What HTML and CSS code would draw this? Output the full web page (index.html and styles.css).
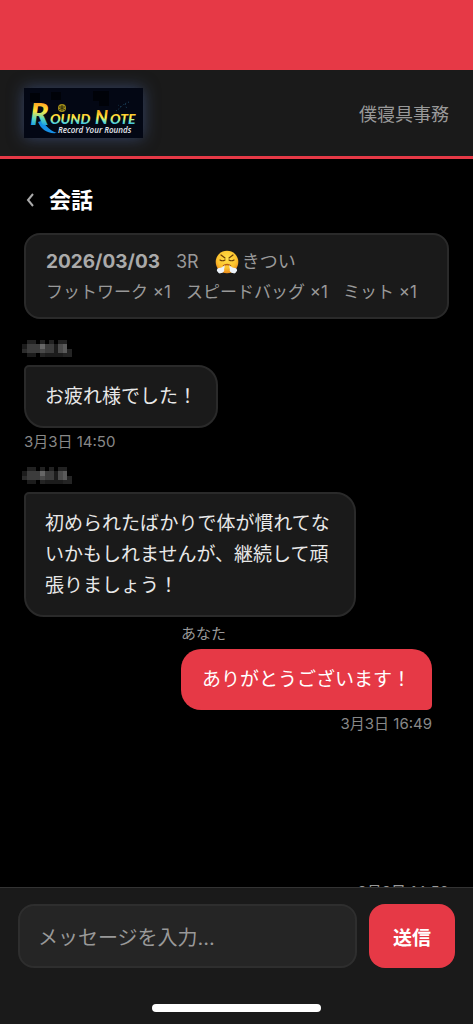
FILE: index.html
```html
<!DOCTYPE html>
<html lang="ja">
<head>
    <meta charset="UTF-8">
    <title>会話 - Round Note</title>
    <meta name="viewport" content="width=device-width, initial-scale=1">
    <link rel="stylesheet" href="styles.css">
</head>
<body>
    <div class="app">
        <div class="status-bar"></div>

        <header class="header">
            <svg class="logo" viewBox="0 0 119 50" role="img" aria-label="Round Note">
                <defs>
                    <linearGradient id="logoR" gradientUnits="userSpaceOnUse" x1="0" y1="14" x2="0" y2="44">
                        <stop offset="0" stop-color="#ff9d1c"/>
                        <stop offset="0.3" stop-color="#ffe63d"/>
                        <stop offset="0.55" stop-color="#5fd8c0"/>
                        <stop offset="0.8" stop-color="#149be8"/>
                    </linearGradient>
                    <linearGradient id="logoWord" gradientUnits="userSpaceOnUse" x1="0" y1="24" x2="0" y2="37">
                        <stop offset="0" stop-color="#ffb31c"/>
                        <stop offset="0.45" stop-color="#fff04a"/>
                        <stop offset="0.7" stop-color="#7fe6c0"/>
                        <stop offset="1" stop-color="#22b4ee"/>
                    </linearGradient>
                </defs>
                <rect width="119" height="50" fill="#030714"/>
                <path d="M6 5h10v9H6zM27 4h10v8H27zM69 3h16v15H75v-5h-6z" fill="#000208"/>
                <path d="M92 23l4-3 4-4 5-2M97 19l-3-2M101 16l2 5" stroke="#1d4661" stroke-width="1" stroke-dasharray="1 2" fill="none"/>
                <path d="M17 33c4 2 7 9 16 12-10 1-16-4-19-11z" fill="#168fe6"/>
                <g font-family="Lato, sans-serif" font-weight="900" font-style="italic">
                    <text x="6" y="37" font-size="31" fill="url(#logoR)">R</text>
                    <text x="26" y="36" font-size="14" fill="url(#logoWord)">OUND</text>
                    <text x="71" y="36" font-size="18" fill="url(#logoWord)">N</text>
                    <text x="86" y="36" font-size="14" fill="url(#logoWord)">OTE</text>
                </g>
                <circle cx="38" cy="20" r="4" fill="#a38e18"/>
                <path d="M35 19h6M38 17v6M35 22l3-2 3 2" stroke="#302e0a" stroke-width="1" fill="none"/>
                <text x="34" y="45" font-size="8" font-family="Open Sans, sans-serif" font-weight="600" font-style="italic" fill="#e4e8ee">Record Your Rounds</text>
            </svg>
            <span class="user-name">僕寝具事務</span>
        </header>

        <main class="main">
            <div class="page-title">
                <a href="#" class="back" aria-label="戻る">
                    <svg viewBox="0 0 11 16"><path d="M9 2L4 8l5 6" fill="none" stroke="#aaa" stroke-width="2"/></svg>
                </a>
                <h1>会話</h1>
            </div>

            <section class="record">
                <div class="record-head">
                    <strong>2026/03/03</strong>
                    <span>3R</span>
                    <span class="feeling">
                        <svg class="emoji" viewBox="0 0 24 24" aria-hidden="true">
                            <defs>
                                <radialGradient id="face" cx="0.5" cy="0.35" r="0.6">
                                    <stop offset="0" stop-color="#ffe04a"/>
                                    <stop offset="0.7" stop-color="#fcc22d"/>
                                    <stop offset="1" stop-color="#ee9420"/>
                                </radialGradient>
                            </defs>
                            <circle cx="12" cy="12" r="11.3" fill="url(#face)"/>
                            <path d="M6 5l4 3M18 5l-4 3M5 10q2.500 1.500 5 0M14 10q2.500 1.500 5 0" fill="none" stroke="#6b3d08" stroke-width="1.200" stroke-linecap="round"/>
                            <path d="M8 16q4-3 8 0" fill="none" stroke="#b55d14" stroke-width="1.500"/>
                            <path d="M10 15c-1 2 0 3-1 4 1 2-1 4-3 4-1 1-3 0-3-1-2-1-1-4 1-4 2 0 4-1 6-3zM14 15c1 2 0 3 1 4-1 2 1 4 3 4 1 1 3 0 3-1 2-1 1-4-1-4-2 0-4-1-6-3z" fill="#edf3fa"/>
                        </svg>きつい
                    </span>
                </div>
                <div class="record-menu">
                    <span>フットワーク ×1</span>
                    <span>スピードバッグ ×1</span>
                    <span>ミット ×1</span>
                </div>
            </section>

            <svg class="defs" aria-hidden="true">
                <symbol id="hiddenName" viewBox="0 0 50 20">
                    <path d="M5 1h9v4H5zM18 1h5v4h-5zM27 1h5v4h-5zM36 1h9v4h-9z" fill="#222"/>
                    <path d="M0 5h5v5H0zM32 5h4v9h-4zM5 14h9v4H5zM23 14h18v4H23z" fill="#1c1c1c"/>
                    <path d="M0 10h5v4H0z" fill="#2c2c2c"/>
                    <path d="M5 5h13v9H5zM23 5h9v9h-9z" fill="#3c3c3c"/>
                    <path d="M18 5h5v5h-5z" fill="#666"/>
                    <path d="M18 10h5v4h-5zM36 5h5v9h-5z" fill="#4a4a4a"/>
                    <path d="M41 5h4v9h-4z" fill="#5a5a5a"/>
                    <path d="M18 14h5v4h-5zM41 14h4v4h-4zM45 10h5v8h-5z" fill="#242424"/>
                </symbol>
            </svg>

            <div class="messages">
                <div class="message">
                    <svg class="sender-hidden" aria-label="送信者"><use href="#hiddenName"/></svg>
                    <p class="bubble">お疲れ様でした！</p>
                    <time>3月3日 14:50</time>
                </div>
                <div class="message">
                    <svg class="sender-hidden" aria-label="送信者"><use href="#hiddenName"/></svg>
                    <p class="bubble">初められたばかりで体が慣れてないかもしれませんが、継続して頑張りましょう！</p>
                </div>
                <div class="message mine">
                    <span class="sender">あなた</span>
                    <p class="bubble">ありがとうございます！</p>
                    <time>3月3日 16:49</time>
                </div>
            </div>

            <div class="next-time"><time>3月3日 14:50</time></div>
        </main>

        <footer class="footer">
            <form class="composer">
                <input type="text" placeholder="メッセージを入力..." aria-label="メッセージを入力">
                <button type="button">送信</button>
            </form>
            <div class="home-indicator"></div>
        </footer>
    </div>
</body>
</html>
```

FILE: styles.css
```css
* {
    margin: 0;
    padding: 0;
    box-sizing: border-box;
}

body {
    font-family: Inter, "Noto Sans CJK JP", sans-serif;
    background: #000;
    color: #999;
}

.app {
    display: flex;
    flex-direction: column;
    height: 100vh;
}

.status-bar {
    height: 70px;
    flex-shrink: 0;
    background: #e63946;
}

.header {
    display: flex;
    align-items: center;
    justify-content: space-between;
    padding: 18px 24px;
    background: #1a1a1a;
    border-bottom: 3px solid #e63946;
}

.logo {
    width: 119px;
    height: 50px;
    box-shadow: 0 0 16px rgba(80, 110, 180, 0.5);
}

.user-name {
    font-size: 18px;
}

.main {
    flex: 1;
    min-height: 0;
    display: flex;
    flex-direction: column;
    padding: 25px 24px 0;
    overflow: hidden;
}

.page-title {
    display: flex;
    align-items: center;
    gap: 14px;
    margin-bottom: 17px;
}

.page-title h1 {
    font-size: 22px;
    line-height: 32px;
    color: #fff;
}

.back svg {
    display: block;
    width: 11px;
    height: 16px;
}

.record {
    padding: 13px 20px 11px;
    background: #1a1a1a;
    border: 2px solid #2a2a2a;
    border-radius: 16px;
}

.record-head {
    display: flex;
    align-items: center;
    gap: 16px;
    font-size: 18px;
    line-height: 28px;
}

.record-head strong {
    font-size: 19px;
    color: #aaa;
}

.feeling {
    display: flex;
    align-items: center;
    gap: 3px;
}

.emoji {
    width: 24px;
    height: 24px;
}

.record-menu {
    display: flex;
    gap: 15px;
    margin-top: 2px;
    font-size: 17px;
    line-height: 28px;
    white-space: nowrap;
}

.defs {
    display: block;
    width: 0;
    height: 0;
}

.messages {
    margin-top: 20px;
}

.message {
    display: flex;
    flex-direction: column;
    align-items: flex-start;
    margin-bottom: 14px;
}

.sender-hidden {
    width: 50px;
    height: 20px;
    margin: 0 0 6px -2px;
}

.bubble {
    max-width: 78%;
    padding: 14px 19px;
    background: #1a1a1a;
    border: 2px solid #2a2a2a;
    border-radius: 5px 20px 20px 20px;
    font-size: 19px;
    line-height: 31px;
    color: #e8e8e8;
}

.message time,
.next-time {
    font-size: 15px;
    line-height: 20px;
}

.message time {
    margin-top: 4px;
    color: #888;
}

.mine {
    width: fit-content;
    margin: -8px 17px 0 auto;
}

.sender {
    font-size: 15px;
    line-height: 22px;
    margin-bottom: 4px;
}

.mine .bubble {
    max-width: none;
    padding: 15px 21px;
    background: #e63946;
    border: none;
    border-radius: 20px 20px 5px 20px;
    color: #fff;
}

.mine time {
    align-self: flex-end;
}

.next-time {
    height: 5px;
    margin-top: auto;
    text-align: right;
}

.footer {
    padding: 16px 18px 12px;
    background: #1a1a1a;
    border-top: 1px solid #333;
}

.composer {
    display: flex;
    align-items: stretch;
    gap: 12px;
}

.composer input {
    flex: 1;
    min-width: 0;
    height: 64px;
    padding: 3px 18px 0;
    background: #252525;
    border: 2px solid #2e2e2e;
    border-radius: 16px;
    font-family: inherit;
    font-size: 20px;
    color: #fff;
}

.composer input::placeholder {
    color: #999;
}

.composer button {
    width: 86px;
    background: #e63946;
    border: none;
    border-radius: 16px;
    font-family: inherit;
    font-size: 19px;
    font-weight: 700;
    color: #fff;
    cursor: pointer;
}

.home-indicator {
    width: 169px;
    height: 8px;
    margin: 36px auto 0;
    background: #fff;
    border-radius: 4px;
}
```
